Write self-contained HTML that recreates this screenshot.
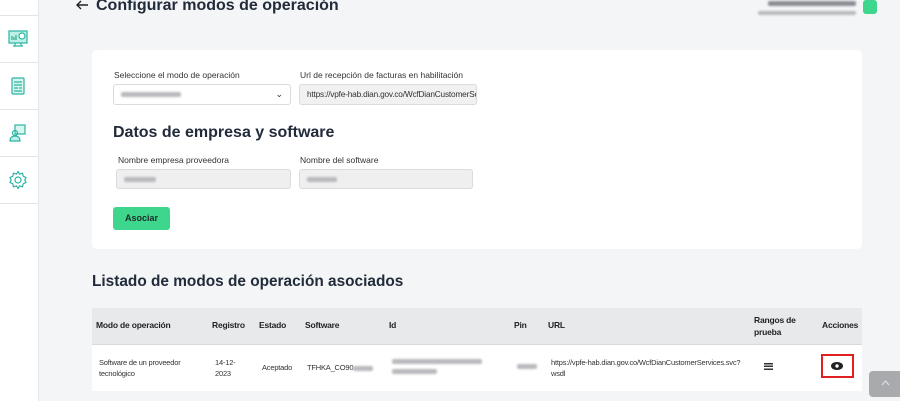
<!DOCTYPE html>
<html><head><meta charset="utf-8"><style>
*{box-sizing:border-box;margin:0;padding:0}
body{width:900px;height:401px;overflow:hidden;background:#f4f5f7;font-family:"Liberation Sans",sans-serif;color:#222;position:relative}
.side{position:absolute;left:0;top:0;width:39px;height:401px;background:#fff;border-right:1px solid #e6e7ea}
.sep{position:absolute;left:0;width:38px;border-top:1px solid #e3e4e7}
.ic{position:absolute;left:8px;width:20px;height:20px}
.abs{position:absolute}
h1{position:absolute;left:96px;top:-3px;font-size:16px;font-weight:bold;color:#222b3a}
.card{position:absolute;left:92px;top:50px;width:770px;height:199px;background:#fff;border-radius:5px}
.lbl{position:absolute;font-size:8.5px;color:#333}
.inp{position:absolute;height:21px;border:1px solid #d9dbe0;border-radius:3px;font-size:8.3px;line-height:19px;padding-left:7px;color:#333}
.blur{display:inline-block;height:5px;background:#b8b9bd;border-radius:2px;filter:blur(1px);vertical-align:middle}
h2{position:absolute;font-size:16px;font-weight:bold;color:#222b3a}
.btn{position:absolute;left:113px;top:207px;width:57px;height:23px;background:#3dd68c;border-radius:3px;font-size:9px;font-weight:bold;text-align:center;line-height:23px;color:#1d2a2a}
.th{position:absolute;top:308px;left:92px;width:770px;height:36px;background:#e8e9eb}
.tr{position:absolute;top:344px;left:92px;width:770px;height:47px;background:#fff;border-top:1px solid #d8d9dc}
.t{position:absolute;font-size:8.5px;font-weight:bold;color:#222;letter-spacing:-.2px}
.c{position:absolute;font-size:7.5px;color:#333;line-height:11px;letter-spacing:-.2px}
</style></head><body>
<div class="side">
<div class="sep" style="top:15px"></div><div class="sep" style="top:62px"></div><div class="sep" style="top:109px"></div><div class="sep" style="top:156px"></div><div class="sep" style="top:203px"></div>
<svg class="ic" style="top:29px" viewBox="0 0 20 20" fill="none" stroke="#2bb3a3" stroke-width="1.2"><rect x="1" y="2" width="18" height="12" fill="#bdf0e6"/><path d="M7 14v3M13 14v3M5 17h10"/><path d="M4 11V7M6 11V8M8 11V6" stroke="#3a8"/><circle cx="14" cy="7" r="3" fill="#fff"/></svg>
<svg class="ic" style="top:76px" viewBox="0 0 20 20" fill="none" stroke="#2bb3a3" stroke-width="1.2"><rect x="4" y="2" width="12" height="16" rx="1" fill="#d9f5ef"/><path d="M6 6h8M6 9h8M6 12h4M11 12h3M6 15h8"/></svg>
<svg class="ic" style="top:123px" viewBox="0 0 20 20" fill="none" stroke="#2bb3a3" stroke-width="1.2"><rect x="7" y="2" width="10" height="9" fill="#d9f5ef"/><circle cx="7" cy="10" r="2.5"/><path d="M2 18c0-4 3-5 5-5s5 1 5 5z" fill="#bdf0e6"/></svg>
<svg class="ic" style="top:170px" viewBox="0 0 20 20" fill="none" stroke="#2bb3a3" stroke-width="1.2"><circle cx="10" cy="10" r="3"/><path d="M10 1.5l1.5 2.5 3-.8.7 3 2.8 1.3-1.2 2.5 1.2 2.5-2.8 1.3-.7 3-3-.8L10 18.5l-1.5-2.5-3 .8-.7-3L2 12.5 3.2 10 2 7.5l2.8-1.3.7-3 3 .8z"/></svg>
</div>
<svg class="abs" style="left:75px;top:0" width="14" height="12" viewBox="0 0 14 12" fill="none" stroke="#222" stroke-width="1.4"><path d="M13 5H2M6 1L2 5l4 4"/></svg>
<h1>Configurar modos de operación</h1>
<span class="blur abs" style="left:768px;top:1px;width:88px;height:5px;background:#8a8c92"></span>
<span class="blur abs" style="left:758px;top:11px;width:98px;height:4px"></span>
<div class="abs" style="left:863px;top:0;width:14px;height:14px;background:#3dd68c;border-radius:3px"></div>
<div class="card"></div>
<div class="lbl" style="left:114px;top:70px">Seleccione el modo de operación</div>
<div class="lbl" style="left:300px;top:70px">Url de recepción de facturas en habilitación</div>
<div class="inp" style="left:113px;top:84px;width:178px;background:#fff"><span class="blur" style="width:60px"></span><span style="position:absolute;right:7px;top:0;font-size:9px">⌄</span></div>
<div class="inp" style="left:299px;top:84px;width:178px;background:#f1f1f2;overflow:hidden;white-space:nowrap;letter-spacing:-.2px">https://vpfe-hab.dian.gov.co/WcfDianCustomerSer</div>
<h2 style="left:113px;top:124px">Datos de empresa y software</h2>
<div class="lbl" style="left:118px;top:155px">Nombre empresa proveedora</div>
<div class="lbl" style="left:300px;top:155px">Nombre del software</div>
<div class="inp" style="left:116px;top:169px;width:175px;height:20px;background:#efeff0"><span class="blur" style="width:32px"></span></div>
<div class="inp" style="left:299px;top:169px;width:174px;height:20px;background:#efeff0"><span class="blur" style="width:30px"></span></div>
<div class="btn">Asociar</div>
<h2 style="left:92px;top:273px;font-size:15.4px">Listado de modos de operación asociados</h2>
<div class="th"></div><div class="tr"></div>
<div class="t" style="left:96px;top:320px">Modo de operación</div>
<div class="t" style="left:212px;top:320px">Registro</div>
<div class="t" style="left:259px;top:320px">Estado</div>
<div class="t" style="left:305px;top:320px">Software</div>
<div class="t" style="left:389px;top:320px">Id</div>
<div class="t" style="left:514px;top:320px">Pin</div>
<div class="t" style="left:548px;top:320px">URL</div>
<div class="t" style="left:754px;top:314px;line-height:12px">Rangos de<br>prueba</div>
<div class="t" style="left:822px;top:320px">Acciones</div>
<div class="c" style="left:99px;top:357px">Software de un proveedor<br>tecnológico</div>
<div class="c" style="left:215px;top:357px">14-12-<br>2023</div>
<div class="c" style="left:262px;top:362px">Aceptado</div>
<div class="c" style="left:307px;top:362px">TFHKA_CO90<span class="blur" style="width:20px"></span></div>
<span class="blur abs" style="left:392px;top:359px;width:90px"></span>
<span class="blur abs" style="left:392px;top:369px;width:45px"></span>
<span class="blur abs" style="left:517px;top:364px;width:20px"></span>
<div class="c" style="left:551px;top:357px">https://vpfe-hab.dian.gov.co/WcfDianCustomerServices.svc?<br>wsdl</div>
<div class="abs" style="left:764px;top:363px;width:9px;height:8px;background:repeating-linear-gradient(#333 0 1.5px,#fff 1.5px 2.7px)"></div>
<div class="abs" style="left:821px;top:354px;width:33px;height:24px;border:2px solid #e02020"></div>
<svg class="abs" style="left:831px;top:362px" width="12" height="8" viewBox="0 0 12 8"><ellipse cx="6" cy="4" rx="6" ry="4" fill="#222"/><circle cx="6" cy="4" r="1.7" fill="#fff"/></svg>
<div class="abs" style="left:869px;top:371px;width:31px;height:26px;background:#a8aaae;border-radius:4px 0 0 4px"></div>
<svg class="abs" style="left:881px;top:380px" width="9" height="6" viewBox="0 0 9 6" fill="none" stroke="#ddd" stroke-width="1.2"><path d="M1 5l3.5-4 3.5 4"/></svg>
</body></html>
